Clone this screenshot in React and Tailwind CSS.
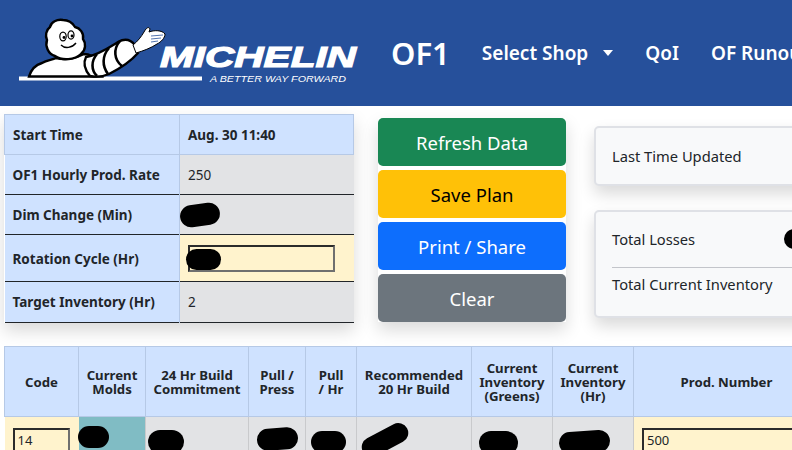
function Logo() {
  return (
    <svg width="345" height="74" viewBox="15 18 345 74" className="shrink-0">
      <rect x="19" y="78.5" width="183" height="4" fill="#fff" />
      {/* torso */}
      <path d="M29 78.5C31 72 35 67 42 65C47 62 52 62 56 60C64 62 75 61 84 56C88 56 90 57 92 58L102 78.5Z" fill="#fff" stroke="#000" strokeWidth="2.4" />
      {/* arm */}
      <path d="M86 59C98 57 110 49 118 44C125 40 131 42 135 47L138 55C131 63 119 71 109 76C102 79 95 79 90 78C85 72 83 65 86 59Z" fill="#fff" stroke="#000" strokeWidth="2.4" />
      <path d="M97 56C91 63 91 72 97 78M109 50C102 58 102 68 108 76M120 43C113 51 114 62 122 68" fill="none" stroke="#000" strokeWidth="2.6" />
      {/* hand */}
      <path d="M133 47C138 43 141 39 144 34C146 30 149 28 150 31L149 34C154 32 162 32 165 36C165 40 161 44 157 46C151 50 143 53 136 55Z" fill="#fff" stroke="#000" strokeWidth="1" />
      <path d="M151 38L163 37M151 41L161 40M151 44L158 43" stroke="#26509b" strokeWidth="0.8" fill="none" />
      {/* head */}
      <path d="M63 22C57 21 51 24 50 29C46 32 45 38 47 42C45 48 48 56 55 58C62 63 75 62 81 56C86 52 86 45 83 41C84 35 80 30 75 29C72 24 68 22 63 22Z" fill="#fff" stroke="#000" strokeWidth="2.4" />
      <ellipse cx="63" cy="38.5" rx="3.2" ry="4.4" fill="#fff" stroke="#000" strokeWidth="1.2" />
      <ellipse cx="71" cy="37" rx="3" ry="4.2" fill="#fff" stroke="#000" strokeWidth="1.2" />
      <circle cx="64" cy="39.5" r="1.4" fill="#000" />
      <circle cx="72" cy="38" r="1.4" fill="#000" />
      <path d="M61 47C65 51 72 50 76 45" fill="none" stroke="#000" strokeWidth="1.4" />
      <text x="160" y="69" textLength="196" lengthAdjust="spacingAndGlyphs" fill="#fff" stroke="#fff" strokeWidth="1.2" fontFamily="'Liberation Sans', sans-serif" fontWeight="700" fontStyle="italic" fontSize="29.5">MICHELIN</text>
      <text x="210" y="83.5" textLength="136" lengthAdjust="spacingAndGlyphs" fill="#fff" fontFamily="'Liberation Sans', sans-serif" fontStyle="italic" fontSize="9.5">A BETTER WAY FORWARD</text>
    </svg>
  );
}

function Blob({ className }) {
  return <span className={`absolute bg-black rounded-full ${className}`} />;
}

function Input({ value, className }) {
  return (
    <div className={`border-2 border-t-[#2b2b2b] border-l-[#2b2b2b] border-r-[#6f6f6f] border-b-[#6f6f6f] font-normal text-[13px] leading-[21px] px-[3px] ${className}`}>
      {value}
    </div>
  );
}

const tdL = "bg-[#cfe2ff] border-r border-r-[#b6c9e6] pl-[8px] pt-[2px] font-bold";
const dark = "border-b border-b-[#212529]";
const tdR = "relative bg-[#e2e3e5] pl-[8px] pt-[2px]";

function InfoTable() {
  return (
    <table className="w-[350px] table-fixed border-collapse text-[13.5px] text-[#212529] shadow-[0_8px_16px_rgba(0,0,0,0.15)] shrink-0 self-start">
      <colgroup><col className="w-[175px]" /><col /></colgroup>
      <tbody>
        <tr className="h-[40px] border-b border-b-[#b6c9e6]">
          <td className={`${tdL} border-t border-t-[#b6c9e6] border-l border-l-[#b6c9e6]`}>Start Time</td>
          <td className="bg-[#cfe2ff] pl-[8px] pt-[2px] font-bold border-t border-t-[#b6c9e6] border-r border-r-[#b6c9e6]">Aug. 30 11:40</td>
        </tr>
        <tr className={`h-[40px] ${dark}`}>
          <td className={tdL}>OF1 Hourly Prod. Rate</td>
          <td className={tdR}>250</td>
        </tr>
        <tr className={`h-[40px] ${dark}`}>
          <td className={tdL}>Dim Change (Min)</td>
          <td className={tdR}><Blob className="left-[0px] top-[9px] w-[40px] h-[22px] -rotate-[8deg]" /></td>
        </tr>
        <tr className={`h-[47px] ${dark}`}>
          <td className="bg-[#cfe2ff] border-r border-r-[#b6c9e6] pl-[8px] pt-[2px] font-bold">Rotation Cycle (Hr)</td>
          <td className="relative bg-[#fff3cd] pl-[8px]">
            <Input value="" className="w-[147px] h-[27px]" />
            <Blob className="left-[6px] top-[14px] w-[35px] h-[21px]" />
          </td>
        </tr>
        <tr className={`h-[41px] ${dark}`}>
          <td className="bg-[#cfe2ff] border-r border-r-[#b6c9e6] pl-[8px] font-bold">Target Inventory (Hr)</td>
          <td className="relative bg-[#e2e3e5] pl-[8px]">2</td>
        </tr>
      </tbody>
    </table>
  );
}

function Btn({ className, children }) {
  return <div className={`h-[48px] pt-[2px] rounded-[5px] flex items-center justify-center text-[18.5px] ${className}`}>{children}</div>;
}

const th = "border border-[#b6c9e6] bg-[#cfe2ff] font-bold text-center leading-[14px] px-1";
const td = "relative bg-[#e2e3e5] border-x border-x-[#c9cacc] h-[60px]";

function ProdTable() {
  const cols = [
    ["w-[74px]", "Code"],
    ["w-[67px]", <>Current<br />Molds</>],
    ["w-[103px]", <>24 Hr Build<br />Commitment</>],
    ["w-[57px]", <>Pull /<br />Press</>],
    ["w-[51px]", <>Pull<br />/ Hr</>],
    ["w-[115px]", <>Recommended<br />20 Hr Build</>],
    ["w-[81px]", <>Current<br />Inventory<br />(Greens)</>],
    ["w-[81px]", <>Current<br />Inventory<br />(Hr)</>],
    ["w-[186px]", "Prod. Number"],
  ];
  return (
    <table className="w-[815px] table-fixed border-collapse text-[13.2px] text-[#212529] shrink-0">
      <colgroup>{cols.map((c, i) => <col key={i} className={c[0]} />)}</colgroup>
      <thead>
        <tr className="h-[70px]">{cols.map((c, i) => <th key={i} className={th}>{c[1]}</th>)}</tr>
      </thead>
      <tbody>
        <tr>
          <td className="bg-[#fff3cd] h-[60px] align-top pl-[8px] pt-[11px]"><Input value="14" className="w-[57px] h-[30px]" /></td>
          <td className="relative bg-[#80bcc4] h-[60px]"><Blob className="-left-[1px] top-[9px] w-[31px] h-[22px]" /></td>
          <td className={td}><Blob className="left-[2px] top-[13px] w-[36px] h-[24px]" /></td>
          <td className={td}><Blob className="left-[8px] top-[11px] w-[41px] h-[22px] -rotate-[4deg]" /></td>
          <td className={td}><Blob className="left-[5px] top-[14px] w-[35px] h-[22px]" /></td>
          <td className={td}><Blob className="left-[3px] top-[13px] w-[50px] h-[20px] -rotate-[28deg]" /></td>
          <td className={td}><Blob className="left-[7px] top-[14px] w-[39px] h-[24px]" /></td>
          <td className={td}><Blob className="left-[6px] top-[14px] w-[51px] h-[22px] -rotate-[4deg]" /></td>
          <td className="bg-[#fff3cd] h-[60px] align-top pl-[8px] pt-[11px]"><Input value="500" className="w-[170px] h-[30px]" /></td>
        </tr>
      </tbody>
    </table>
  );
}

export default function App() {
  return (
    <div className="w-[792px] h-[450px] overflow-hidden bg-white font-['Noto_Sans','Open_Sans',sans-serif]">
      <header className="h-[106px] bg-[#26509b] flex items-center text-white whitespace-nowrap pl-[15px] overflow-hidden">
        <Logo />
        <span className="ml-[31px] text-[31px] font-semibold">OF1</span>
        <span className="ml-[32px] text-[19px] font-semibold flex items-center">
          Select Shop
          <span className="ml-[15px] w-0 h-0 border-x-[5.5px] border-x-transparent border-t-[6px] border-t-white" />
        </span>
        <span className="ml-[32px] text-[19px] font-semibold">QoI</span>
        <span className="ml-[32px] text-[19px] font-semibold">OF Runout</span>
      </header>
      <main className="pl-1 pt-2 flex flex-col gap-[23px]">
        <section className="flex items-start w-[900px]">
          <InfoTable />
          <div className="ml-6 mt-1 w-[188px] flex flex-col gap-1 shadow-[0_8px_16px_rgba(0,0,0,0.15)] shrink-0">
            <Btn className="bg-[#198754] text-white">Refresh Data</Btn>
            <Btn className="bg-[#ffc107] text-black">Save Plan</Btn>
            <Btn className="bg-[#0d6efd] text-white">Print / Share</Btn>
            <Btn className="bg-[#6c757d] text-white">Clear</Btn>
          </div>
          <div className="ml-[28px] mt-3 w-[280px] flex flex-col gap-6 text-[#212529] text-[14.7px] shrink-0">
            <div className="h-[60px] rounded-[5px] border-2 border-[#dfe1e6] bg-[#f8f9fa] px-[16px] flex items-center shadow-[0_8px_16px_rgba(0,0,0,0.15)]">
              Last Time Updated
            </div>
            <div className="h-[108px] rounded-[5px] border-2 border-[#dfe1e6] bg-[#f8f9fa] px-[16px] shadow-[0_8px_16px_rgba(0,0,0,0.15)]">
              <div className="relative h-[56px] flex items-center border-b border-b-[#c3c5ca]">
                Total Losses
                <Blob className="left-[172px] top-[17px] w-[30px] h-[20px]" />
              </div>
              <div className="h-[33px] flex items-center">Total Current Inventory</div>
            </div>
          </div>
        </section>
        <ProdTable />
      </main>
    </div>
  );
}
